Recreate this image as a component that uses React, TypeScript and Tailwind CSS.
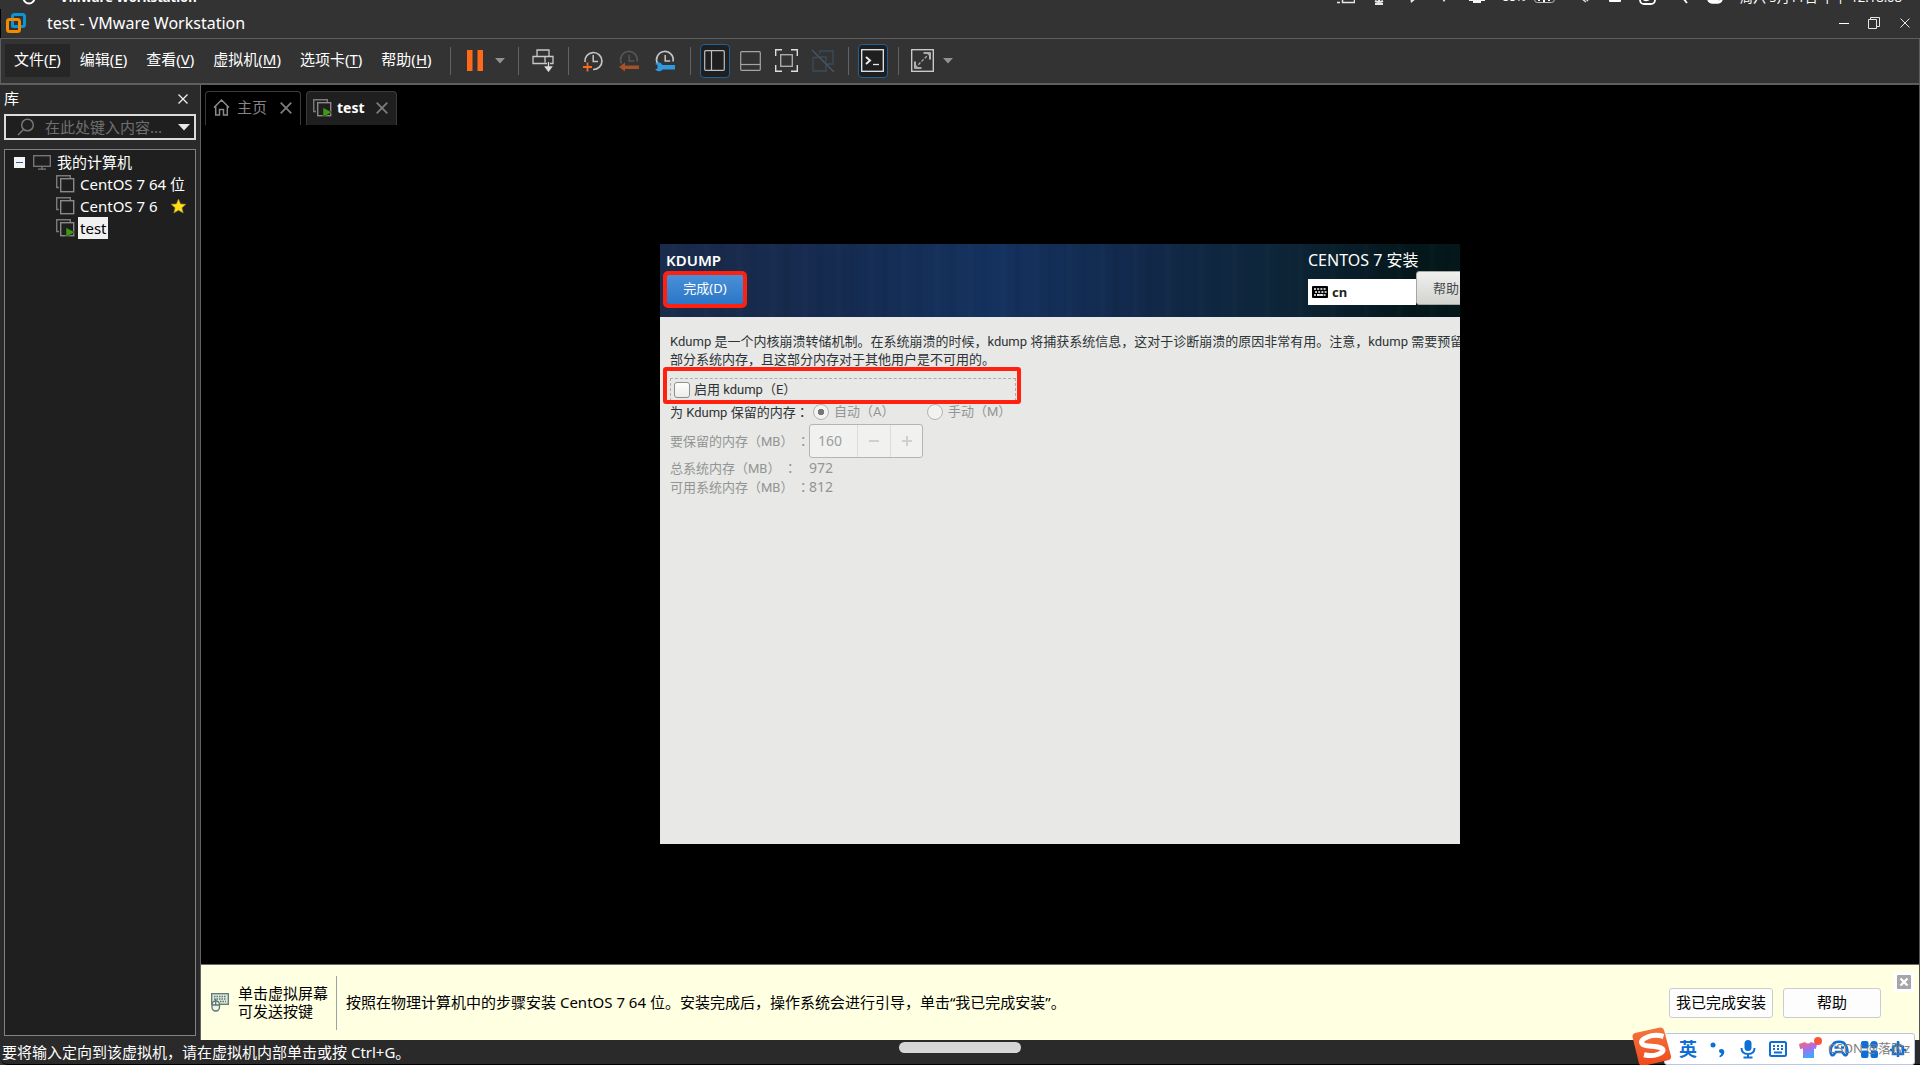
import { useState, type ReactNode } from "react";

const MENUS = [
    { label: "文件", key: "F" },
    { label: "编辑", key: "E" },
    { label: "查看", key: "V" },
    { label: "虚拟机", key: "M" },
    { label: "选项卡", key: "T" },
    { label: "帮助", key: "H" },
];

function Separator() {
    return <span className="ml-[7px] mr-[6px] h-7 w-px shrink-0 bg-[#636363]" />;
}

function ToolButton({ label, active, children }: { label: string; active?: boolean; children: ReactNode }) {
    return (
        <button aria-label={label} className="flex h-9 w-9 shrink-0 items-center justify-center">
            <span
                className={
                    active
                        ? "flex h-[34px] w-[30px] items-center justify-center rounded-sm border border-[#1f6198] bg-[#1f1f1f]"
                        : "flex items-center justify-center"
                }
            >
                {children}
            </span>
        </button>
    );
}

function CaretButton({ label }: { label: string }) {
    return (
        <button aria-label={label} className="flex h-9 w-[18px] shrink-0 items-center justify-center pr-1">
            <svg width="10" height="6" viewBox="0 0 10 6">
                <path d="M0 0h10L5 5.500z" fill="#919191" />
            </svg>
        </button>
    );
}

function VmIcon({ running }: { running?: boolean }) {
    return (
        <svg width="19" height="18" viewBox="0 0 19 18" fill="none" className="shrink-0">
            <path d="M3 12.500H.7V.7h13.600V3" stroke="#7a7a7a" strokeWidth="1.400" />
            <rect x="4.700" y="3.700" width="13" height="13" stroke="#8a8a8a" strokeWidth="1.400" />
            {running && <path d="M10 8.500v9.500l9-4.700z" fill="#3f9a10" stroke="#1f1f1f" strokeWidth=".5" />}
        </svg>
    );
}

function ClockFace({ dim }: { dim?: boolean }) {
    const color = dim ? "#555" : "#c4c4c4";
    return (
        <>
            <path d="M3.500 13.500A8.300 8.300 0 1 1 19 11.500" stroke={color} strokeWidth="1.700" />
            <path d="M11.200 5v6h5" stroke={color} strokeWidth="1.500" />
        </>
    );
}

function MacBar() {
    return (
        <div className="h-[9px] shrink-0 overflow-hidden text-white">
            <div className="-mt-[15px] flex h-6 items-center justify-between pl-[22px] pr-[18px] text-[13px] leading-6">
                <div className="flex items-center gap-6">
                    <svg width="14" height="16" viewBox="0 0 14 16" fill="none">
                        <circle cx="7" cy="9" r="5.500" stroke="#fff" strokeWidth="2" />
                    </svg>
                    <b>VMware Workstation</b>
                </div>
                <div className="flex items-center gap-[17px]">
                    <svg width="18" height="14" viewBox="0 0 18 14" fill="none" stroke="#e8e8e8" strokeWidth="1.500">
                        <path d="M0 12.500h3M5.500 8v4.500h12V3h-12" />
                    </svg>
                    <svg width="14" height="16" viewBox="0 0 14 16" fill="none" stroke="#e8e8e8" strokeWidth="2">
                        <path d="M7 2v12M3 12q4 2 8 0M3 15h8" />
                    </svg>
                    <svg width="16" height="16" viewBox="0 0 16 16" fill="#e8e8e8">
                        <path d="M6 2l7 8-5 4z" />
                    </svg>
                    <svg width="16" height="16" viewBox="0 0 16 16" fill="#e8e8e8">
                        <path d="M4 7h8l-4 6z" />
                    </svg>
                    <svg width="16" height="16" viewBox="0 0 16 16" fill="#f5f5f5">
                        <path d="M0 2h16v10h-4v2H4v-2H0z" />
                    </svg>
                    <div className="flex items-center gap-2">
                        <span className="text-xs">88%</span>
                        <svg width="22" height="12" viewBox="0 0 22 12" fill="none" stroke="#bbb">
                            <rect x=".5" y=".5" width="20" height="11" rx="3" />
                            <path d="M5 3v7M10 3v8M15 3v7" stroke="#fff" strokeWidth="2" />
                        </svg>
                    </div>
                    <svg width="18" height="14" viewBox="0 0 18 14" fill="none" stroke="#e0e0e0" strokeWidth="1.500">
                        <path d="M3 4l10 8M7 3l8 8" />
                    </svg>
                    <svg width="14" height="12" viewBox="0 0 14 12" fill="#fff">
                        <rect x="1" width="12" height="11" rx="1" />
                    </svg>
                    <svg width="18" height="16" viewBox="0 0 18 16" fill="none" stroke="#fff" strokeWidth="1.800">
                        <rect x="1" y="1" width="15" height="14" rx="4" />
                        <path d="M4 10q5 4 9-4" />
                    </svg>
                    <svg width="16" height="14" viewBox="0 0 16 14" fill="none" stroke="#fff" strokeWidth="1.800">
                        <circle cx="6" cy="5" r="4" />
                        <path d="M9 8l4 5" />
                    </svg>
                    <svg width="16" height="14" viewBox="0 0 16 14" fill="none" stroke="#fff" strokeWidth="1.500">
                        <rect x="1" y="3" width="14" height="10" rx="4" fill="#fff" />
                        <circle cx="12" cy="9" r="2" fill="#333" />
                    </svg>
                    <span>周六 5月11日 下午 12:18:08</span>
                </div>
            </div>
        </div>
    );
}

function TitleBar() {
    return (
        <header className="flex h-[29px] shrink-0 items-center border-l border-black pl-[5px] pb-px text-white">
            <svg width="20" height="20" viewBox="0 0 20 20" fill="none" strokeWidth="3">
                <rect x="6.500" y="1.500" width="12" height="12" rx="2" stroke="#0f93d2" />
                <rect x="1.500" y="6.500" width="12" height="12" rx="2" stroke="#f38b00" />
                <path d="M6.500 8.500v3.500q0 1.500 1.500 1.500h3.500" stroke="#0f93d2" />
            </svg>
            <h1 className="ml-[21px] grow text-base">test - VMware Workstation</h1>
            <div className="flex items-center pr-[10px]">
                <button aria-label="最小化" className="mr-[19px] flex h-5 w-[10px] items-center">
                    <span className="h-px w-full bg-white" />
                </button>
                <button aria-label="还原" className="mr-[20px]">
                    <svg width="12" height="12" viewBox="0 0 12 12" fill="none" stroke="#e6e6e6">
                        <path d="M.5 2.500h8v9h-8zM2.500 2.500v-2h9v9h-3" />
                    </svg>
                </button>
                <button aria-label="关闭">
                    <svg width="10" height="10" viewBox="0 0 10 10" stroke="#e6e6e6">
                        <path d="M.5.5l9 9M9.500.5l-9 9" />
                    </svg>
                </button>
            </div>
        </header>
    );
}

function Toolbar() {
    return (
        <div className="flex h-[47px] shrink-0 items-center border-x border-y border-b-2 border-[#5e5e5e] pb-px pl-1 text-[15px] text-white">
            <nav className="flex gap-px pr-[2px]">
                {MENUS.map((menu, i) => (
                    <button
                        key={menu.key}
                        className={i === 0 ? "h-[33px] bg-[#262626] px-[9px] pb-[2px]" : "h-[33px] px-[9px] pb-[2px]"}
                    >
                        {menu.label}(<u className="underline-offset-2">{menu.key}</u>)
                    </button>
                ))}
            </nav>
            <Separator />
            <ToolButton label="挂起">
                <svg width="16" height="21" viewBox="0 0 16 21" fill="#ff6a1a">
                    <path d="M0 0h5.500v21H0zM10.500 0H16v21h-5.500z" />
                </svg>
            </ToolButton>
            <CaretButton label="电源选项" />
            <Separator />
            <ToolButton label="发送 Ctrl+Alt+Del">
                <svg width="22" height="23" viewBox="0 0 22 23" fill="none" stroke="#c9c9c9" strokeWidth="1.300">
                    <path d="M5 7V1h12v6M1 7.500h20v7H1zM13 7.500v6" />
                    <path d="M16.500 12v8" strokeWidth="3" stroke="#333" />
                    <path d="M16.500 13v7M13.500 18l3 4 3-4z" fill="#ddd" stroke="#ddd" />
                </svg>
            </ToolButton>
            <Separator />
            <ToolButton label="拍摄快照">
                <svg width="22" height="22" viewBox="0 0 22 22" fill="none">
                    <path d="M3 12A8.500 8.500 0 1 1 11 19.500" stroke="#c4c4c4" strokeWidth="1.700" />
                    <path d="M11.200 5v6.500H16" stroke="#c4c4c4" strokeWidth="1.500" />
                    <path d="M5.500 12.500v9M1 17h9" stroke="#f26c26" strokeWidth="1.800" />
                </svg>
            </ToolButton>
            <ToolButton label="恢复快照">
                <svg width="22" height="22" viewBox="0 0 22 22" fill="none">
                    <ClockFace dim />
                    <path d="M1 17l6-4.500v3h14v3.500H7v2.500z" fill="#a5522a" />
                </svg>
            </ToolButton>
            <ToolButton label="管理快照">
                <svg width="22" height="22" viewBox="0 0 22 22" fill="none">
                    <ClockFace />
                    <path
                        d="M1 14l2.500 1v3.500L1 19.500q2.500 2.500 5.500 1.500 1.500-.5 2-1.500H21v-4.500H8.500Q7 12.500 4.500 12.200 2.500 12.200 1 14z"
                        fill="#2f9ae0"
                    />
                </svg>
            </ToolButton>
            <Separator />
            <ToolButton label="显示库" active>
                <svg width="21" height="21" viewBox="0 0 21 21" fill="none" stroke="#bdbdbd" strokeWidth="1.200">
                    <rect x=".7" y=".7" width="19.600" height="19.600" rx="1" />
                    <path d="M7.500 1v19" />
                </svg>
            </ToolButton>
            <ToolButton label="显示缩略图栏">
                <svg width="21" height="20" viewBox="0 0 21 20" fill="none" stroke="#a5a5a5" strokeWidth="1.200">
                    <rect x=".7" y=".7" width="19.600" height="18.600" rx="1" />
                    <path d="M1 13.500h19" />
                </svg>
            </ToolButton>
            <ToolButton label="进入全屏模式">
                <svg width="23" height="23" viewBox="0 0 23 23" fill="none" stroke="#ddd" strokeWidth="1.400">
                    <path d="M.7 7V.7H7M16 .7h6.300V7M22.300 16v6.300H16M7 22.300H.7V16" />
                    <rect x="5.700" y="5.700" width="11.600" height="11.600" stroke="#aaa" />
                </svg>
            </ToolButton>
            <ToolButton label="Unity">
                <svg width="24" height="24" viewBox="0 0 24 24" fill="none" stroke="#3c4c58" strokeWidth="1.300">
                    <path d="M9 5V2h13v13h-7M2 8.500h5M2 8.500V22h13v-6M9 8h6v5" />
                    <path d="M1 1l22 22" stroke="#46586a" />
                </svg>
            </ToolButton>
            <Separator />
            <ToolButton label="控制台视图" active>
                <svg width="23" height="23" viewBox="0 0 23 23" fill="none" stroke="#e8e8e8" strokeWidth="1.300">
                    <rect x=".7" y=".7" width="21.600" height="21.600" />
                    <path d="M5 8l4 3.500L5 15" strokeWidth="2" />
                    <path d="M12 15.500h6" />
                </svg>
            </ToolButton>
            <Separator />
            <ToolButton label="自由拉伸">
                <svg width="23" height="23" viewBox="0 0 23 23" fill="none" stroke="#d2d2d2" strokeWidth="1.300">
                    <rect x=".7" y=".7" width="21.600" height="21.600" />
                    <path d="M12.500 4H19v6.500M4 12.500V19h6.500" strokeWidth="1.600" />
                    <path d="M19 4L4 19" stroke="#aaa" strokeDasharray="3 1.500" />
                </svg>
            </ToolButton>
            <CaretButton label="拉伸选项" />
        </div>
    );
}

function Library() {
    return (
        <aside className="flex w-[201px] shrink-0 flex-col border-r border-[#636363] bg-[#2a2a2a] text-[15px] text-white">
            <div className="flex h-[29px] shrink-0 items-center justify-between pb-[2px] pl-1 pr-3">
                <h2>库</h2>
                <button aria-label="关闭库">
                    <svg width="10" height="10" viewBox="0 0 10 10" stroke="#eee" strokeWidth="1.300">
                        <path d="M.5.5l9 9M9.500.5l-9 9" />
                    </svg>
                </button>
            </div>
            <div className="mx-1 flex h-[26px] shrink-0 items-center border-2 border-[#dcdcdc] bg-[#1f1f1f] pl-[11px] pr-1">
                <svg width="18" height="18" viewBox="0 0 18 18" fill="none" stroke="#777" strokeWidth="1.500" className="shrink-0">
                    <circle cx="10.500" cy="7" r="5.800" />
                    <path d="M6.500 11.500L1 17" />
                </svg>
                <input
                    aria-label="搜索库"
                    placeholder="在此处键入内容..."
                    className="ml-[10px] min-w-0 grow bg-transparent outline-none placeholder:text-[#707070]"
                />
                <button aria-label="搜索选项">
                    <svg width="12" height="7" viewBox="0 0 12 7">
                        <path d="M0 0h12L6 6.500z" fill="#e8e8e8" />
                    </svg>
                </button>
            </div>
            <ul className="mx-1 mb-1 mt-[9px] grow border border-[#7f8288] bg-[#1f1f1f] pt-px leading-[22px]">
                <li className="flex h-[22px] items-center pl-[9px]">
                    <button aria-label="折叠" className="flex h-[11px] w-[11px] items-center justify-center bg-[#f4f4f4]">
                        <span className="h-px w-[7px] bg-[#3b55a5]" />
                    </button>
                    <svg width="18" height="15" viewBox="0 0 18 15" fill="none" stroke="#7c7c7c" strokeWidth="1.300" className="ml-2 mr-[6px]">
                        <rect x=".7" y=".7" width="16.600" height="10.600" />
                        <path d="M9 11v3M5 14.200h8" />
                    </svg>
                    我的计算机
                </li>
                <li className="flex h-[22px] items-center gap-[5px] whitespace-nowrap pl-[51px]">
                    <VmIcon />
                    CentOS 7 64 位
                </li>
                <li className="flex h-[22px] items-center gap-[5px] whitespace-nowrap pl-[51px]">
                    <VmIcon />
                    <span className="w-[85px]">CentOS 7 6</span>
                    <svg width="17" height="16" viewBox="0 0 17 16" className="shrink-0">
                        <path
                            d="M8.500 1l2.100 4.900 5.400.4-4.100 3.500 1.300 5.200-4.700-2.800L3.800 15l1.300-5.200L1 6.300l5.400-.4z"
                            fill="#ffde17"
                            stroke="#a58a28"
                            strokeWidth=".6"
                        />
                    </svg>
                </li>
                <li className="flex h-[22px] items-center gap-[3px] pl-[51px]">
                    <VmIcon running />
                    <span className="bg-[#f0f0f0] px-[2px] text-black">test</span>
                </li>
            </ul>
        </aside>
    );
}

function CloseGlyph() {
    return (
        <svg width="12" height="12" viewBox="0 0 12 12" stroke="#7c7c7c" strokeWidth="1.800">
            <path d="M.7.7l10.600 10.600M11.300.7L.7 11.300" />
        </svg>
    );
}

function Tabs() {
    return (
        <div className="flex h-10 shrink-0 items-end gap-[5px] pl-1 text-[15px]">
            <div className="flex h-[34px] w-24 items-center rounded-t-[4px] border border-b-0 border-[#3a3a3a] pb-[2px] pl-[7px] text-[#858585]">
                <svg width="17" height="17" viewBox="0 0 17 17" fill="none" stroke="#8a8a8a" strokeWidth="1.500">
                    <path d="M1 8.500L8.500 1 16 8.500M2.700 7.500V16H6.500v-5.500h4V16h3.800V7.500" />
                </svg>
                <a href="#home" className="ml-[7px] grow">主页</a>
                <button aria-label="关闭主页" className="mr-2">
                    <CloseGlyph />
                </button>
            </div>
            <div className="flex h-[34px] w-[91px] items-center rounded-t-[4px] border border-b-0 border-[#3a3a3a] bg-[#1f1f1f] pb-[2px] pl-[6px] text-white">
                <VmIcon running />
                <a href="#test" className="ml-[5px] grow text-[14px] font-bold">test</a>
                <button aria-label="关闭 test" className="mr-2">
                    <CloseGlyph />
                </button>
            </div>
        </div>
    );
}

// The guest draws its colon in the middle of the full-width cell
function Colon() {
    return <span className="font-['Noto_Sans_CJK_JP',sans-serif]">：</span>;
}

function Installer() {
    const [enabled, setEnabled] = useState(false);

    return (
        <section className="h-[600px] w-[800px] overflow-hidden bg-[#e8e8e6] text-[13px] leading-[18px] text-[#2e3436]">
            <div className="flex h-[73px] justify-between bg-[repeating-linear-gradient(90deg,transparent_0_9px,rgba(255,255,255,0.012)_12px_14px,transparent_18px_22px,rgba(0,0,0,0.04)_26px_29px,transparent_33px),linear-gradient(90deg,#1a2b4b_0%,#152b50_22%,#14325f_42%,#12294b_60%,#0d2538_78%,#04171b_94%)] text-white">
                <div className="pl-[6px] pt-[6px]">
                    <h2 className="text-[15px] font-semibold leading-5">KDUMP</h2>
                    <button className="ml-px mt-[5px] h-[29px] w-[76px] rounded-[1px] bg-gradient-to-b from-[#4a90d9] to-[#2a76c6] pb-1 outline-4 outline-[#ff2010]">
                        完成(D)
                    </button>
                </div>
                <div className="w-[152px] overflow-hidden pt-[6px]">
                    <p className="text-base leading-5">CENTOS 7 安装</p>
                    <div className="flex items-end pt-px">
                        <span className="flex h-[26px] w-[108px] shrink-0 items-center gap-1 bg-white pl-1 font-bold text-[#222]">
                            <svg width="16" height="12" viewBox="0 0 16 12">
                                <rect width="16" height="12" rx="1" fill="#000" />
                                <path
                                    d="M2 3h12M3 6h12M2 9h12"
                                    stroke="#fff"
                                    strokeWidth="1.600"
                                    strokeDasharray="2 1.200"
                                />
                                <path d="M5 9h6" stroke="#fff" strokeWidth="1.600" />
                            </svg>
                            cn
                        </span>
                        <button className="h-[34px] w-24 shrink-0 rounded-[3px] border border-[#a5a7a2] bg-gradient-to-b from-[#f0f0ef] to-[#d3d3d0] pl-4 text-left text-[#44494b]">
                            帮助
                        </button>
                    </div>
                </div>
            </div>

            <div className="pl-[10px] pt-4 font-['Roboto','Noto_Sans_CJK_SC',sans-serif]">
                <p className="whitespace-nowrap">
                    Kdump 是一个内核崩溃转储机制。在系统崩溃的时候，kdump 将捕获系统信息，这对于诊断崩溃的原因非常有用。注意，kdump 需要预留
                    <br />
                    部分系统内存，且这部分内存对于其他用户是不可用的。
                </p>
                <div className="relative mt-[9px] w-[346px]">
                    <label className="flex h-[23px] items-center gap-1 border border-b-0 border-dashed border-[#adada9] pl-[3px]">
                        <input
                            type="checkbox"
                            checked={enabled}
                            onChange={(e) => setEnabled(e.target.checked)}
                            className="h-4 w-4 appearance-none rounded-[3px] border border-[#8f918c] bg-gradient-to-b from-white to-[#ececea] checked:bg-[#4a90d9]"
                        />
                        启用 kdump（E）
                    </label>
                    <span className="pointer-events-none absolute -bottom-[3px] -left-[7px] -right-[5px] -top-[11px] rounded-[3px] border-4 border-[#ff2010]" />
                </div>

                <div className="grid grid-cols-[139px_1fr] whitespace-nowrap text-[#929595]">
                    <span className="leading-[22px] text-[#2e3436]">为 Kdump 保留的内存<Colon /></span>
                    <div className="flex h-[22px] items-center pl-1">
                        <label className="flex w-[114px] items-center gap-[5px]">
                            <input
                                type="radio"
                                name="memory"
                                disabled
                                checked
                                readOnly
                                className="h-4 w-4 appearance-none rounded-full border border-[#b3b5b0] bg-[radial-gradient(circle,#777_0_3px,#f2f2f1_3px)]"
                            />
                            自动（A）
                        </label>
                        <label className="flex items-center gap-[5px]">
                            <input
                                type="radio"
                                name="memory"
                                disabled
                                className="h-4 w-4 appearance-none rounded-full border border-[#b3b5b0] bg-[#f2f2f1]"
                            />
                            手动（M）
                        </label>
                    </div>
                    <label htmlFor="reserve" className="leading-[34px]">要保留的内存（MB） <Colon /></label>
                    <div className="flex h-[34px] w-[114px] rounded-[3px] border border-[#b5b6b2] bg-[#f1f1f0] font-['Noto_Sans',sans-serif] text-[#9c9e9e]">
                        <input id="reserve" disabled defaultValue="160" className="w-[47px] bg-transparent pb-px pl-2 text-[14px]" />
                        <button disabled aria-label="减少" className="flex w-[33px] items-center justify-center border-l border-[#dcdcda]">
                            <span className="h-[2px] w-[10px] bg-[#cfcfcd]" />
                        </button>
                        <button disabled aria-label="增加" className="flex w-8 items-center justify-center border-l border-[#dcdcda]">
                            <svg width="10" height="10" viewBox="0 0 10 10" stroke="#cfcfcd" strokeWidth="2">
                                <path d="M5 0v10M0 5h10" />
                            </svg>
                        </button>
                    </div>
                    <span>总系统内存（MB） <Colon /></span>
                    <span className="font-['Noto_Sans',sans-serif] text-[14px]">972</span>
                    <span>可用系统内存（MB） <Colon /></span>
                    <span className="font-['Noto_Sans',sans-serif] text-[14px]">812</span>
                </div>
            </div>
        </section>
    );
}

function HintBar() {
    return (
        <div className="flex h-[76px] shrink-0 border-t border-[#6b6b6b] bg-[#ffffe1] text-[15px] text-black">
            <div className="flex grow items-center pl-[10px]">
                <svg width="18" height="19" viewBox="0 0 18 19" fill="none" stroke="#5b7676" strokeWidth="1.300">
                    <rect x=".7" y=".7" width="16.600" height="10.600" fill="#dfe9d8" />
                    <path d="M3 3.500h12M3 6h12M9 8.500h6" strokeDasharray="1.500 1" />
                    <rect x="1" y="8" width="7.500" height="10" rx="3.700" fill="#f2f2e6" />
                    <path d="M1 12h7.500M4.700 6v6" />
                </svg>
                <p className="ml-[9px] pb-[2px] leading-[18px]">
                    单击虚拟屏幕
                    <br />
                    可发送按键
                </p>
                <span className="ml-2 mr-[9px] h-[54px] w-px bg-[#9da1a8]" />
                <p>按照在物理计算机中的步骤安装 CentOS 7 64 位。安装完成后，操作系统会进行引导，单击“我已完成安装”。</p>
            </div>
            <div className="flex items-center gap-[10px]">
                <button className="h-[30px] w-[104px] rounded-[3px] border border-[#cbcbd2] bg-[#fdfdfd]">我已完成安装</button>
                <button className="h-[30px] w-[98px] rounded-[3px] border border-[#cbcbd2] bg-[#fdfdfd]">帮助</button>
            </div>
            <div className="pl-[13px] pr-[5px] pt-[7px]">
                <button aria-label="关闭提示" className="flex h-5 w-5 items-center justify-center bg-white">
                    <svg width="14" height="14" viewBox="0 0 14 14">
                        <rect width="14" height="14" rx="1" fill="#a6a6a6" />
                        <path d="M3.500 3.500l7 7M10.500 3.500l-7 7" stroke="#fff" strokeWidth="2.400" />
                    </svg>
                </button>
            </div>
        </div>
    );
}

// Floating input method toolbar, sits above the status bar
function InputMethodBar() {
    return (
        <div className="absolute bottom-0 right-[5px] flex h-8 items-center rounded-[3px] border border-[#b7c8e4] bg-white pl-[14px] pr-2 text-[#0d6fd6]">
            <svg width="40" height="39" viewBox="0 0 40 39" className="absolute -left-[33px] -top-[7px]">
                <defs>
                    <linearGradient id="sogou" x1="0" y1="0" x2="0" y2="1">
                        <stop offset="0" stopColor="#f4763d" />
                        <stop offset="1" stopColor="#f0481c" />
                    </linearGradient>
                </defs>
                <path d="M3 6L28 .5q3-.5 4 2.500l7 26q.6 3-2 4L11 39q-3 .5-4-2.500L.5 10q-.5-3.200 2.500-4z" fill="url(#sogou)" />
                <path
                    d="M31.500 9.500Q23 7 15.500 10 8 13 10 16.500q1.500 2.500 9 2.700 9 .3 11.500 2.800 2 3-5 5.500-6 2-13.500.3"
                    fill="none"
                    stroke="#fff"
                    strokeWidth="5"
                />
            </svg>
            <div className="flex items-center gap-3">
                <button className="w-[18px] text-lg font-bold leading-none">英</button>
                <button aria-label="中英文标点">
                    <svg width="18" height="18" viewBox="0 0 18 18" fill="currentColor">
                        <circle cx="4" cy="5" r="2.500" />
                        <path d="M10 10q3-2 5 .5 1.500 4-4 7l-.7-1.500q2-1 2-2.700-2.500-.3-2.300-3.300z" />
                    </svg>
                </button>
                <button aria-label="语音">
                    <svg width="18" height="20" viewBox="0 0 18 20" fill="none" stroke="currentColor" strokeWidth="2">
                        <rect x="5.500" y="1" width="7" height="11" rx="3.500" fill="currentColor" stroke="none" />
                        <path d="M2.500 9q0 6 6.500 6t6.500-6M9 15v3M4.500 18.500h9" />
                    </svg>
                </button>
                <button aria-label="软键盘">
                    <svg width="18" height="16" viewBox="0 0 18 16" fill="none" stroke="currentColor">
                        <rect x="1" y="1" width="16" height="14" rx="1.500" strokeWidth="2" />
                        <path d="M4 5h10M4 8h10" strokeWidth="2" strokeDasharray="2 2" />
                        <path d="M5 11.500h8" strokeWidth="2" />
                    </svg>
                </button>
                <button aria-label="皮肤" className="-mr-[5px]">
                    <svg width="23" height="24" viewBox="0 0 23 24">
                        <defs>
                            <linearGradient id="shirt" x1="0" y1="0" x2=".4" y2="1">
                                <stop offset="0" stopColor="#ff6a55" />
                                <stop offset=".5" stopColor="#b06bea" />
                                <stop offset="1" stopColor="#3ea8ff" />
                            </linearGradient>
                        </defs>
                        <path d="M0 7l6-2q3 3 6 0l6 2-1 5-2-.5V21H4V11.500L1 12z" fill="url(#shirt)" />
                        <circle cx="19" cy="4" r="4" fill="#f9553c" />
                    </svg>
                </button>
                <button aria-label="游戏">
                    <svg width="20" height="18" viewBox="0 0 20 18" fill="none" stroke="currentColor" strokeWidth="2.600">
                        <path d="M5 3q5-2.500 10 0 3.500 4 3.500 9-.5 4-3 3l-2.500-3H7l-2.500 3q-2.500 1-3-3Q1.500 7 5 3z" />
                        <path d="M5.500 7.500h4M12 7.500h3" />
                    </svg>
                </button>
                <button aria-label="工具箱">
                    <svg width="17" height="17" viewBox="0 0 17 17" fill="currentColor">
                        <rect width="7.500" height="7.500" rx="2" />
                        <circle cx="13" cy="3.800" r="3.800" />
                        <rect y="9.500" width="7.500" height="7.500" rx="2" />
                        <rect x="9.500" y="9.500" width="7.500" height="7.500" rx="2" />
                    </svg>
                </button>
                <button aria-label="智能助手">
                    <svg width="16" height="18" viewBox="0 0 16 18" fill="none" stroke="currentColor" strokeWidth="2.400">
                        <path d="M8 1v16M3 7q5-4 10 0v7H3zM0 10h3M13 10h3" />
                    </svg>
                </button>
            </div>
            <span className="pointer-events-none absolute right-1 whitespace-nowrap text-[13px] text-[#7d7d7d]">CSDN @落败z</span>
        </div>
    );
}

export default function App() {
    return (
        <div className="relative flex h-screen flex-col overflow-hidden bg-[#333333] font-['Noto_Sans','Noto_Sans_CJK_SC',sans-serif]">
            <MacBar />
            <TitleBar />
            <Toolbar />
            <div className="flex min-h-0 grow">
                <Library />
                <main className="flex min-w-0 grow flex-col border-r border-[#555] bg-black">
                    <Tabs />
                    <div className="flex grow items-center justify-center pb-px">
                        <Installer />
                    </div>
                    <HintBar />
                </main>
            </div>
            <footer className="relative flex h-[25px] shrink-0 items-center rounded-bl-lg border-b border-black bg-[#2a2a2a] pl-[2px] text-[15px] text-white">
                要将输入定向到该虚拟机，请在虚拟机内部单击或按 Ctrl+G。
                <span className="absolute left-1/2 top-[2px] h-[11px] w-[122px] -translate-x-1/2 rounded-full bg-[#d6d6d6]" />
            </footer>
            <InputMethodBar />
        </div>
    );
}
